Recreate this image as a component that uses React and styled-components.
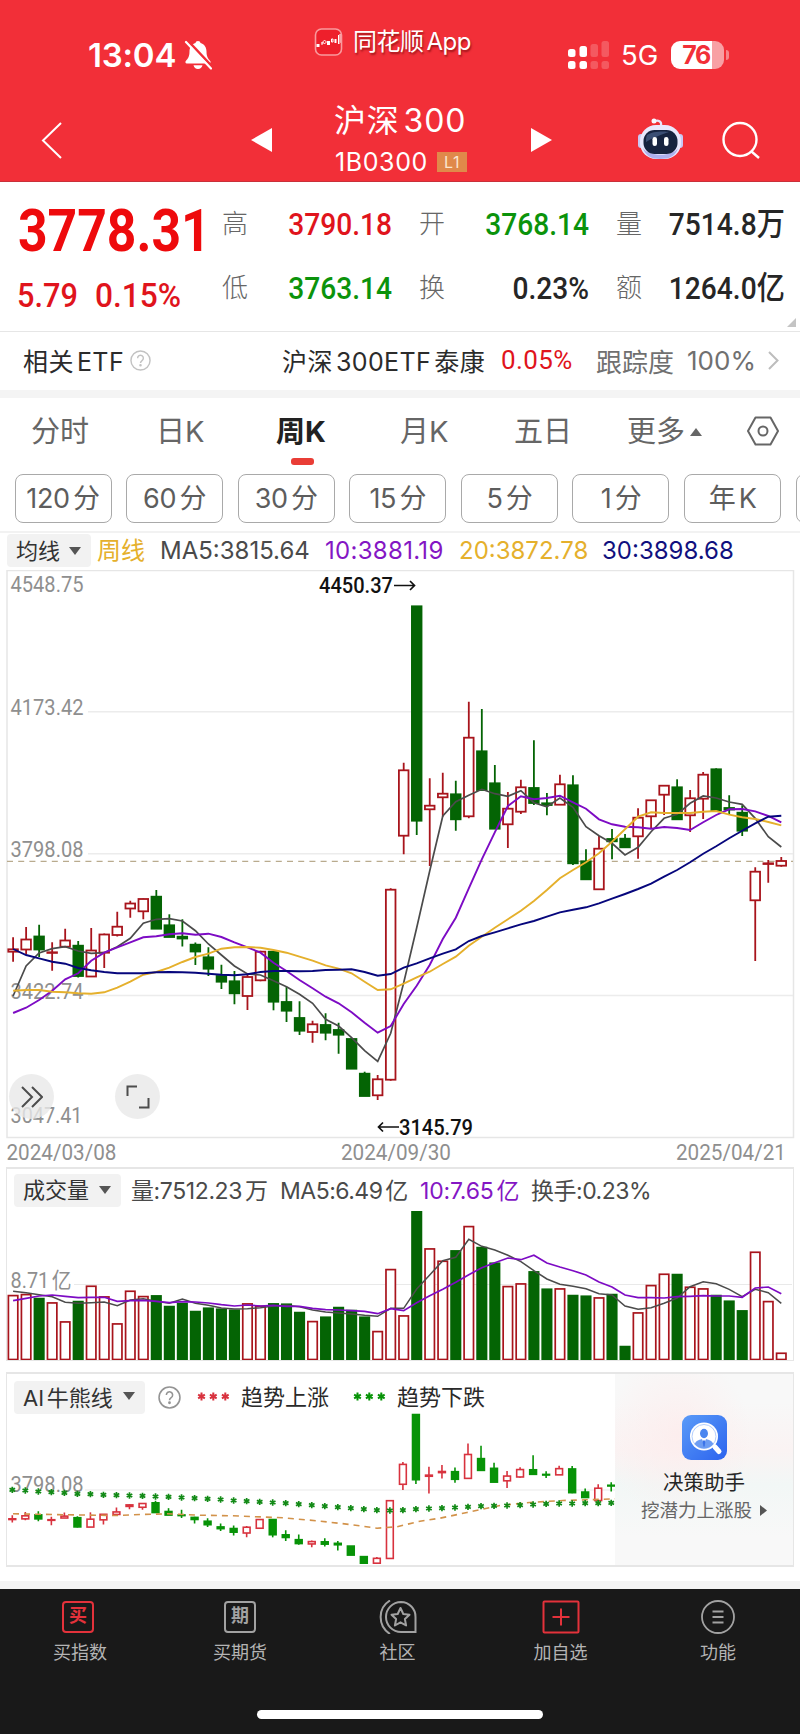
import React from 'react';
import styled, { createGlobalStyle } from 'styled-components';

const GlobalStyle = createGlobalStyle`
    *{
        box-sizing:border-box;
    }

    body{
        margin:0;
        background-color:#fff;
        font-family:Inter, "Noto Sans CJK SC", sans-serif;
        text-autospace:normal;
    }
`;

const RED = '#e0141c';
const GREEN = '#0b930b';

const Screen = styled.div`
    width:800px;
    height:1734px;
    display:flex;
    flex-direction:column;
    overflow:hidden;
    background-color:#fff;
    white-space:nowrap;
`;

/* ---------- header ---------- */

const Header = styled.header`
    height:182px;
    background-color:#f22f38;
    border-bottom:1px solid #c9303a;
    color:#fff;
`;

const StatusBar = styled.div`
    height:92px;
    display:grid;
    grid-template-columns:314px 252px 1fr;
`;

const Clock = styled.div`
    display:flex;
    align-items:center;
    gap:8px;
    padding:17px 0 0 88px;
    font-size:33px;
    font-weight:600;
    letter-spacing:-0.2px;
`;

const AppMark = styled.div`
    display:flex;
    align-items:flex-start;
    gap:10px;
    padding-top:28px;
    font-size:24px;
    font-weight:400;
    line-height:28px;
    letter-spacing:-0.5px;
    text-shadow:1px 2px 2px rgba(90,0,0,0.55);
`;

const Signals = styled.div`
    display:flex;
    align-items:center;
    padding:17px 0 0 2px;
    font-size:27.5px;

    span{
        margin:0 13px 0 11px;
    }
`;

const Battery = styled.div`
    width:53px;
    height:28px;
    border-radius:9px;
    background:linear-gradient(90deg, #fff 77%, #f8a0a4 77%);
    color:#f22f38;
    font-size:25px;
    font-weight:700;
    line-height:28px;
    letter-spacing:-1.5px;
    padding-left:11px;
`;

const BatteryTip = styled.i`
    width:3px;
    height:10px;
    margin-left:2px;
    border-radius:0 4px 4px 0;
    background-color:#f8858b;
`;

const TitleBar = styled.div`
    height:89px;
    display:grid;
    grid-template-columns:251px 83px 133px 85px 86px 84px 1fr;
    align-items:start;
`;

const IconSlot = styled.div`
    padding-top:${({ $top }) => $top}px;
    padding-left:${({ $left = 0 }) => $left}px;

    svg{
        display:block;
        margin-left:${({ $align }) => ($align === 'right' ? 'auto' : 0)};
    }
`;

const StockTitle = styled.div`
    .name{
        height:53px;
        padding-top:8px;
        font-size:32px;
        line-height:42px;
        letter-spacing:0.8px;
    }

    .code{
        display:flex;
        align-items:center;
        justify-content:space-between;
        height:34px;
        padding-left:1px;
        font-size:25px;
        letter-spacing:0.6px;
    }

    .level{
        width:30px;
        height:20px;
        background-color:#e0894a;
        color:#fbe6cf;
        font-size:16px;
        line-height:20px;
        text-align:center;
    }
`;

/* ---------- quote ---------- */

const Quote = styled.section`
    height:149px;
    display:grid;
    grid-template-columns:205px 1fr;
    position:relative;
`;

const Din = styled.span`
    display:inline-block;
    font-family:Roboto, "Noto Sans CJK SC", sans-serif;
    font-weight:${({ $weight = 500 }) => $weight};
    color:${({ $color = '#262626' }) => $color};
    text-autospace:no-autospace;
    transform:scaleX(${({ $k = 0.88 }) => $k});
    transform-origin:${({ $from = 'right' }) => $from} center;
`;

const PriceBox = styled.div`
    padding:11px 0 0 17px;

    .last{
        height:72px;
        padding-left:1px;
        font-size:60px;
        line-height:72px;
    }

    .change{
        display:grid;
        grid-template-columns:78px 1fr;
        padding-top:11px;
        font-size:33px;
        line-height:40px;
    }
`;

const Stats = styled.div`
    display:grid;
    grid-template-columns:170px 197px 196px;
    grid-template-rows:64px 65px;
    padding-top:10px;
    padding-left:17px;
`;

const Stat = styled.div`
    display:flex;
    justify-content:space-between;
    line-height:64px;
    padding-left:${({ $first }) => ($first ? 0 : 27)}px;

    .label{
        font-size:26px;
        font-weight:300;
        color:#666;
    }

    .value{
        width:0;
        display:flex;
        justify-content:flex-end;
        font-size:32px;
    }
`;

const Corner = styled.i`
    position:absolute;
    right:4px;
    bottom:4px;
    border-left:9px solid transparent;
    border-bottom:9px solid #c4c4c4;
`;

const EtfRow = styled.section`
    height:67px;
    display:grid;
    grid-template-columns:107px 152px 219px 95px 91px 81px 1fr;
    align-items:center;
    padding-left:23px;
    padding-bottom:2px;
    border-top:1px solid #e6e6e6;
    border-bottom:8px solid #f4f4f4;
    font-size:25px;
    letter-spacing:0.4px;
    color:#2b2b2b;

    .muted{
        color:#707070;
        font-size:26px;
        letter-spacing:0;
    }

    svg{
        display:block;
    }
`;

/* ---------- period tabs ---------- */

const Tabs = styled.nav`
    height:76px;
    display:grid;
    grid-template-columns:125px 120px 124px 114px 113px 119px 1fr;
    padding-left:31px;
`;

const Tab = styled.div`
    position:relative;
    font-size:29px;
    line-height:68px;
    color:${({ $active }) => ($active ? '#222' : '#666')};
    font-weight:${({ $active }) => ($active ? 700 : 400)};
    text-autospace:no-autospace;

    .bar{
        position:absolute;
        left:15px;
        top:60px;
        width:23px;
        height:7px;
        border-radius:3px;
        background-color:#e93d36;
    }

    svg{
        margin-left:5px;
        vertical-align:6px;
    }
`;

const Periods = styled.div`
    height:59px;
    display:flex;
    gap:14.6px;
    padding-left:14.5px;
    border-bottom:2px solid #f2f2f2;
    overflow:hidden;
`;

const Period = styled.button`
    flex:none;
    width:97px;
    height:49px;
    padding:0;
    border:1px solid #a9a9a9;
    border-radius:8px;
    background-color:#fff;
    color:#5d5d5d;
    font-family:inherit;
    font-size:27px;
    line-height:46px;
    letter-spacing:-0.4px;
`;

/* ---------- indicator legends ---------- */

const MaLegend = styled.div`
    height:37px;
    display:grid;
    grid-template-columns:90px 63px 165px 134px 143px 1fr;
    padding:1px 0 2px 7px;
    font-size:24px;
    line-height:34px;
`;

const Pick = styled.div`
    width:${({ $w }) => $w}px;
    height:33px;
    display:flex;
    align-items:center;
    justify-content:space-between;
    padding:0 10px ${({ $lift = 0 }) => $lift}px 9px;
    border-radius:4px;
    background-color:#f2f2f2;
    color:#333;
    font-size:22px;
`;

const Value = styled.span`
    color:${({ $color = '#4a4a4a' }) => $color};
    letter-spacing:${({ $ls = 0 }) => $ls}px;
`;

const ChartBox = styled.section`
    position:relative;
    height:597px;

    svg{
        display:block;
    }
`;

const RoundButton = styled.button`
    position:absolute;
    left:${({ $left }) => $left}px;
    top:504px;
    width:45px;
    height:45px;
    display:flex;
    align-items:center;
    justify-content:center;
    padding:0;
    border:none;
    border-radius:50%;
    background-color:rgba(232,232,232,0.8);
`;

const Panel = styled.section`
    height:${({ $h }) => $h}px;
    margin:0 6px ${({ $gap }) => $gap}px;
    border:1px solid #e6e6e6;
    border-top-width:2px;
    border-bottom-width:${({ $bottom = 1 }) => $bottom}px;
    display:flex;
`;

const PanelMain = styled.div`
    flex:1;
    min-width:0;
    overflow:hidden;

    > svg{
        display:block;
    }
`;

const VolumeLegend = styled.div`
    height:42px;
    display:grid;
    grid-template-columns:117px 149px 140px 111px 1fr;
    align-items:center;
    padding:5px 0 4px 7px;
    font-size:23px;
    line-height:30px;
`;

const TrendLegend = styled.div`
    height:39px;
    display:grid;
    grid-template-columns:144px 39px 44px 112px 44px 1fr;
    align-items:center;
    padding:5px 0 1px 7px;
    font-size:22px;
    color:#2a2a2a;

    .name{
        padding-bottom:4px;
    }

    svg{
        display:block;
    }
`;

const Assistant = styled.aside`
    width:178px;
    display:flex;
    flex-direction:column;
    align-items:center;
    padding-top:41px;
    background:
        radial-gradient(ellipse at 35% 32%, rgba(253,236,236,0.8), rgba(250,246,246,0) 45%),
        linear-gradient(180deg, #f8f8f8 15%, #faf3f3 40%, #f2f7f6 58%, #f8f8f8 85%);

    .title{
        margin-top:9px;
        font-size:20.5px;
        line-height:27px;
        color:#262626;
    }

    .hint{
        display:flex;
        align-items:center;
        gap:8px;
        font-size:18.5px;
        line-height:28px;
        color:#666;
    }
`;

/* ---------- bottom bar ---------- */

const Footer = styled.footer`
    flex:1;
    display:flex;
    flex-direction:column;
    justify-content:space-between;
    align-items:center;
    border-top:8px solid #f4f4f4;
    background-color:#191919;
    padding-bottom:15px;
`;

const NavBar = styled.nav`
    width:100%;
    display:grid;
    grid-template-columns:160px 160px 155px 171px 144px;
    padding-top:11px;
`;

const NavItem = styled.div`
    display:flex;
    flex-direction:column;
    align-items:center;
    gap:6px;
    font-size:18px;
    line-height:25px;
    color:#b4b4b4;

    svg{
        display:block;
    }
`;

const NavGlyph = styled.div`
    width:32px;
    height:32px;
    margin:1px ${({ $shift = 0 }) => $shift}px 1px 0;
    border:2px solid ${({ $color }) => $color};
    border-radius:4px;
    color:${({ $color }) => $color};
    font-size:18px;
    font-weight:700;
    line-height:26px;
    text-align:center;
`;

const HomeBar = styled.i`
    width:286px;
    height:9px;
    border-radius:5px;
    background-color:#fff;
`;

/* ---------- data ---------- */

// [up, high, body top, body bottom, low] in chart pixels
const CANDLES = [
    [1, 367.3, 379.3, 381.7, 391.7], [1, 357, 369.5, 379.5, 384], [0, 354.7, 366.5, 379.5, 387],
    [1, 372.3, 382.3, 382.7, 400.7], [1, 358.7, 370.5, 376.7, 377], [0, 371, 375.7, 406, 407.5],
    [1, 358, 380.5, 406.5, 406.5], [1, 363.5, 364.5, 382.7, 398], [1, 341.7, 356.7, 365, 366.5],
    [1, 330.7, 333.5, 338.5, 347.7], [1, 328.5, 329, 341.3, 349.3], [0, 320, 326.7, 358.7, 358.7],
    [0, 344.3, 355.3, 367, 367], [0, 349.3, 366.7, 368.5, 376.5], [0, 372.5, 374.7, 381.5, 395],
    [0, 377.3, 387.3, 398.7, 406], [0, 394.7, 406, 411.7, 419], [0, 401, 411.3, 423.3, 434.3],
    [1, 403.3, 407, 426, 440], [1, 380.7, 381.7, 410.3, 411.3], [0, 381.7, 381.7, 431.7, 440.3],
    [0, 416.7, 432, 440.7, 452], [0, 431.3, 448, 460.7, 465], [1, 450.7, 454.3, 462, 472.7],
    [0, 443.3, 455, 462.7, 470.3], [0, 452.7, 460, 464.7, 483.7], [0, 469, 469, 498.7, 498.7],
    [0, 501.7, 503.7, 526, 526], [1, 505, 509.3, 525.3, 530], [1, 318.3, 319.7, 509.7, 510.7],
    [1, 192.7, 200.3, 265.7, 284.3], [0, 36.3, 36.3, 250.7, 265], [1, 208.3, 235.7, 239.3, 296],
    [1, 202.7, 223.7, 227.3, 246.7], [0, 210.7, 224.3, 249.3, 260.7], [1, 131.7, 167.7, 246.3, 248.3],
    [0, 139, 181.3, 220, 220], [0, 195, 213.3, 258.7, 258.7], [1, 222, 238.7, 254.3, 278],
    [1, 209.7, 217.3, 241.7, 244], [0, 170.3, 218, 233, 235], [0, 223, 233.3, 235, 245.3],
    [1, 204.7, 214.3, 234.7, 234.7], [0, 205.3, 215.3, 293.3, 295], [0, 279.3, 291.3, 309.3, 309.3],
    [1, 266, 278.7, 319.3, 319.3], [0, 259, 269, 271.3, 289.3], [0, 264, 268.7, 277.3, 277.3],
    [1, 238.3, 247.7, 266.3, 288.7], [1, 230, 230.3, 246.3, 258.3], [1, 215, 215.7, 224.7, 245],
    [0, 209.3, 217.3, 249.3, 249.3], [1, 220, 228.3, 245.3, 262], [1, 202, 204.7, 228.7, 249],
    [0, 198.3, 199.3, 240.7, 240.7], [0, 225.3, 238, 239.5, 245], [0, 235.3, 242.7, 260.7, 266],
    [1, 297.3, 301.7, 330.3, 391], [1, 290, 293.3, 294, 312.7], [1, 287, 291, 295.7, 296.7],
];

const MA5 = [
    426, 396, 383, 378.7, 376.7, 381, 383.3, 382.7, 376.7, 368.3, 353.3, 349.3, 348.7, 351, 360.7, 374, 385, 396,
    404, 405, 410.7, 416.7, 424.3, 433.3, 449.3, 456, 467.7, 480.7, 491.3, 463.3, 412.7, 357.7, 301, 246, 231.7,
    225.3, 219.3, 223.7, 226.3, 220.7, 232.7, 236.7, 228, 237.3, 256.7, 265.7, 273.3, 285, 277.3, 261.7, 248.3,
    244.3, 233.3, 226, 228, 232, 234.3, 248.3, 266.7, 277,
];

const MA10 = [
    443, 437.7, 430, 420.7, 409.3, 403.3, 390.7, 382.7, 377.3, 372.3, 367.3, 366.3, 364.3, 363.3, 364.7, 363.7,
    367, 372.3, 377.3, 382.7, 392.7, 401, 410, 418.3, 426.7, 433.3, 442.3, 452.7, 462.7, 456, 434, 415.7, 395, 369,
    347.7, 318.3, 289.3, 262.3, 236, 226.3, 229.3, 228, 225.7, 232.3, 238.7, 249.3, 254.3, 256.7, 257.3, 258.7,
    257, 258, 260, 252.3, 245, 239.3, 239, 241.3, 246, 252.3,
];

const MA20 = [
    420.7, 420, 420, 421.7, 422.3, 423.3, 423.7, 422.3, 417.7, 411.7, 404.7, 402, 397.7, 392, 387, 383.7, 378.7,
    377.3, 377, 377.7, 380, 382.7, 386.7, 390.7, 395.3, 398.7, 403.3, 411.7, 420, 419.3, 413.7, 407.3, 401.7, 394,
    386.7, 375.7, 366.7, 357.7, 349.3, 340.7, 331, 320, 308.3, 300, 292.3, 283.3, 271.7, 259.3, 246.7, 242.3, 243,
    243, 243, 241.7, 241, 244.7, 247.3, 249, 252, 255.3,
];

const MA30 = [
    379, 385, 388.3, 391.7, 393.7, 398, 400.3, 402, 403.3, 403.3, 403.3, 402.3, 402, 402.3, 402.7, 403.7, 404.7,
    405.3, 404.3, 402, 401, 401, 401.3, 401, 400, 399.7, 399.3, 402, 405.7, 404, 397.7, 393.3, 388.3, 383.7, 379.3,
    371, 366, 362.3, 358.3, 354.3, 351, 346.7, 342.3, 339.7, 337.3, 333.3, 328.7, 324, 319, 313.7, 306.7, 300,
    292.3, 283.7, 276.3, 268.3, 260.7, 253.3, 246.7, 245.7,
];

// volume panel works on a grid three times finer than the screen
const VOLUME = [
    405, 402, 414, 427, 484, 423, 377, 409, 490, 392, 408, 406, 438, 429, 453, 443, 446, 449, 430, 437, 430, 431,
    456, 483, 470, 441, 450, 470, 513, 327, 466, 147, 265, 302, 271, 198, 261, 308, 378, 370, 334, 386, 385, 405,
    407, 412, 402, 558, 457, 375, 341, 342, 380, 385, 405, 422, 451, 275, 423, 578,
];

const VOLUME_MA5 = [
    394, 398, 404, 410, 427, 430, 428, 426, 437, 420, 416, 424, 430, 417, 430, 436, 444, 447, 446, 443, 438, 436,
    440, 450, 456, 459, 462, 466, 469, 445, 445, 387, 345, 302, 292, 238, 259, 270, 286, 305, 332, 357, 373, 379,
    386, 401, 405, 438, 448, 443, 430, 414, 380, 365, 371, 388, 410, 388, 398, 430,
];

const VOLUME_MA10 = [
    422, 415, 408, 405, 409, 413, 412, 412, 424, 422, 421, 424, 428, 425, 426, 429, 434, 438, 435, 438, 436, 439,
    439, 445, 449, 450, 452, 454, 461, 446, 452, 428, 407, 388, 367, 344, 323, 308, 294, 299, 286, 309, 321, 332,
    345, 366, 381, 405, 413, 413, 414, 410, 409, 407, 408, 408, 412, 384, 381, 401,
];

const TREND = [
    373, 375, 378, 380, 382, 385, 386, 388, 389, 390, 391, 393, 394, 396, 398, 400, 402, 405, 407, 409, 411, 413,
    416, 419, 422, 425, 428, 431, 434, 435, 434, 431, 429, 428, 426, 424, 422, 421, 420, 419, 417, 415, 414, 414,
    413, 413, 412,
];

// the last slot is an empty button scrolled past the screen edge
const PERIODS = ['120分', '60分', '30分', '15分', '5分', '1分', '年K', ''];

const STATS = [
    { label: '高', value: '3790.18', color: RED },
    { label: '开', value: '3768.14', color: GREEN },
    { label: '量', value: '7514.8万' },
    { label: '低', value: '3763.14', color: GREEN },
    { label: '换', value: '0.23%' },
    { label: '额', value: '1264.0亿' },
];

const STEP = 13.02;
const centre = (i) => 13.1 + STEP * i;
const line = (values, k = 1) => values.map((y, i) => `${centre(i).toFixed(1)},${(y / k).toFixed(1)}`).join(' ');

/* ---------- small drawings ---------- */

const Caret = ({ up, color = '#555', w = 12, h = 8 }) => (
    <svg width={w} height={h} viewBox="0 0 12 8">
        <path d={up ? 'M0 8L6 0L12 8Z' : 'M0 0H12L6 8Z'} fill={color} />
    </svg>
);

const Help = ({ size, color }) => (
    <svg width={size} height={size} viewBox="0 0 22 22" fill="none" stroke={color} strokeWidth="1.5">
        <circle cx="11" cy="11" r="10" />
        <path d="M8 8.6a3 3 0 1 1 4.6 2.5c-1 .7-1.6 1.2-1.6 2.6" />
        <circle cx="11" cy="16" r=".6" fill={color} />
    </svg>
);

const Star = ({ x, y, r = 3.2, color, width = 1.7 }) => (
    <path
        d={`M${x} ${y - r}V${y + r}M${x - r * 0.87} ${y - r / 2}L${x + r * 0.87} ${y + r / 2}M${x - r * 0.87} ${y + r / 2}L${x + r * 0.87} ${y - r / 2}`}
        stroke={color}
        strokeWidth={width}
    />
);

const Stars = ({ color }) => (
    <svg width="33" height="10" viewBox="0 0 33 10">
        {[4.5, 16.3, 28.3].map((x) => <Star key={x} x={x} y={4.5} r={3.9} color={color} width={2} />)}
    </svg>
);

const DinText = ({ x, y, w, size = 22, color = '#8f8f8f', weight = 400, children }) => (
    <text
        x={x}
        y={y}
        textLength={w}
        lengthAdjust="spacingAndGlyphs"
        fontFamily='Roboto, "Noto Sans CJK SC", sans-serif'
        fontSize={size}
        fontWeight={weight}
        fill={color}
    >
        {children}
    </text>
);

const BellOff = () => (
    <svg width="28" height="30" viewBox="0 0 28 30">
        <path
            d="M14 1C12.500 1 11.700 1.800 11.500 3C7.600 4 5.500 7.500 5.500 11.500C5.500 16.500 4 18.500 1.800 21C1 22 1.400 23.400 2.800 23.400H25.200C26.600 23.400 27 22 26.200 21C24 18.500 22.500 16.500 22.500 11.500C22.500 7.500 20.400 4 16.500 3C16.300 1.800 15.500 1 14 1ZM9.500 25.200C10 27.500 11.700 29 14 29S18 27.500 18.500 25.200Z"
            fill="#fff"
        />
        <path d="M4 1L28 26.500" stroke="#f22f38" strokeWidth="2.600" />
        <path d="M2 2L27 28.500" stroke="#fff" strokeWidth="2.200" strokeLinecap="round" />
    </svg>
);

const AppLogo = () => (
    <svg width="29" height="28" viewBox="0 0 28 28" fill="none">
        <rect x="1" y="1" width="26" height="26" rx="6" fill="#ee1f2b" stroke="#f99a9d" strokeWidth="1.600" />
        <path d="M2 16h3v3h-3zM12.500 13h3v4h-3zM20 11h2v4h-2z" fill="#fff" />
        <path d="M7.500 14v3M7 15h2M10 12.500a1.500 1.500 0 1 0 .1 0M17 11v3h1.500v-3zM24 7v9l1.500-1.500V6" stroke="#fff" strokeWidth="1" />
    </svg>
);

const SignalDots = () => (
    <svg width="42" height="30" viewBox="0 0 42 30" fill="#fff">
        <rect x="0" y="9" width="7.500" height="8" rx="2.500" />
        <rect x="11.500" y="6" width="7.500" height="11" rx="2.500" />
        <rect x="0" y="21" width="7.500" height="8" rx="2.500" />
        <rect x="11.500" y="21" width="7.500" height="8" rx="2.500" />
        <g opacity=".2">
            <rect x="22.500" y="4" width="7.500" height="13" rx="2.500" />
            <rect x="33.500" y="1" width="7.500" height="16" rx="2.500" />
            <rect x="22.500" y="21" width="7.500" height="8" rx="2.500" />
            <rect x="33.500" y="21" width="7.500" height="8" rx="2.500" />
        </g>
    </svg>
);

const Robot = () => (
    <svg width="45" height="42" viewBox="0 0 45 42">
        <path d="M23 8C24 3 20 2 17 3" fill="none" stroke="#e7e4fb" strokeWidth="2.200" />
        <circle cx="16" cy="3" r="2.500" fill="#f8f7ff" />
        <rect x="0" y="16" width="6" height="14" rx="3" fill="#c9c8f5" />
        <rect x="39" y="16" width="6" height="14" rx="3" fill="#c9c8f5" />
        <rect x="2" y="7" width="41" height="34" rx="16" fill="#e9e8fd" />
        <path d="M5 30c5 9 30 9 35 0-2 8-9 11-17.500 11S7 38 5 30z" fill="#aeb0ee" />
        <rect x="5.500" y="12" width="34" height="24" rx="11" fill="#17233f" />
        <path d="M9 17c5-4 18-4 22-3-6 2-15 5-23 10 0-3 0-5 1-7z" fill="#3b4e74" />
        <rect x="14.500" y="19" width="4.500" height="9" rx="2.200" fill="#fff" />
        <rect x="26" y="19" width="4.500" height="9" rx="2.200" fill="#fff" />
    </svg>
);

const Candle = ({ x, data, y, w, up, down, stroke }) => {
    const [rise, ...levels] = data;
    const [high, top, bottom, low] = levels.map(y);
    const color = rise ? up : down;
    const height = Math.max(bottom - top, 0.6);
    return (
        <g stroke={color} strokeWidth={stroke}>
            <path d={`M${x} ${high}V${top}M${x} ${bottom}V${low}`} />
            <rect x={x - w / 2} y={top} width={w} height={height} fill={rise ? '#fff' : down} />
        </g>
    );
};

function PriceChart() {
    return (
        <svg width="800" height="597" viewBox="0 0 800 597" fill="none">
            <rect x="7" y=".5" width="786.500" height="567" stroke="#e6e6e6" strokeWidth="1.500" />
            <path d="M88 141.700H793M88 283.700H793M88 425.600H793" stroke="#ececec" strokeWidth="1.500" />
            <path d="M7 291.400H793" stroke="#b9ab8e" strokeWidth="1.100" strokeDasharray="6 5.200" />

            <DinText x="10.500" y="22.300" w="73">4548.75</DinText>
            <DinText x="10.500" y="145.300" w="73">4173.42</DinText>
            <DinText x="10.500" y="287.300" w="73">3798.08</DinText>
            <DinText x="10.500" y="428.700" w="73">3422.74</DinText>
            <DinText x="10.500" y="552.700" w="72">3047.41</DinText>

            {CANDLES.map((data, i) => (
                <Candle key={i} x={centre(i)} data={data} y={(v) => v} w={9.6} up="#a8141c" down="#046404" stroke={1.8} />
            ))}

            <polyline points={line(MA5)} stroke="#4b4b4b" strokeWidth="1.700" />
            <polyline points={line(MA10)} stroke="#7d0bc4" strokeWidth="1.900" />
            <polyline points={line(MA20)} stroke="#e5b02c" strokeWidth="1.900" />
            <polyline points={line(MA30)} stroke="#06067c" strokeWidth="1.900" />

            <DinText x="319" y="23.300" w="74" color="#111" weight={500}>4450.37</DinText>
            <path d="M394 15.500H414M410 11L414.500 15.500L410 20" stroke="#111" strokeWidth="1.700" />
            <DinText x="399" y="565" w="74" color="#111" weight={500}>3145.79</DinText>
            <path d="M399 557H378.500M383 552.500L378.500 557L383 561.500" stroke="#111" strokeWidth="1.700" />

            <DinText x="6.500" y="589.500" w="110">2024/03/08</DinText>
            <DinText x="341" y="589.500" w="110">2024/09/30</DinText>
            <DinText x="676" y="589.500" w="110">2025/04/21</DinText>
        </svg>
    );
}

function VolumeChart() {
    return (
        <svg width="785" height="149" viewBox="7 51 785 149" fill="none">
            <path d="M74 124.500H793" stroke="#e9e9e9" />
            <DinText x="10.500" y="127.800" w="61">8.71亿</DinText>
            {VOLUME.map((top, i) => {
                const rise = CANDLES[i][0];
                return (
                    <rect
                        key={i}
                        x={centre(i) - 4.7}
                        y={top / 3 + 0.6}
                        width={9.4}
                        height={198.9 - top / 3}
                        stroke={rise ? '#a8141c' : '#046404'}
                        strokeWidth={1.7}
                        fill={rise ? '#fff' : '#046404'}
                    />
                );
            })}
            <polyline points={line(VOLUME_MA5, 3)} stroke="#4b4b4b" strokeWidth="1.500" />
            <polyline points={line(VOLUME_MA10, 3)} stroke="#7d0bc4" strokeWidth="1.700" />
        </svg>
    );
}

function TrendChart() {
    // same candles as the main chart, squeezed into the lower panel
    const squeeze = (v) => v * 0.304 + 38;
    return (
        <svg width="608" height="151" viewBox="7 47.500 608 151" fill="none">
            <path d="M85 124.500H615" stroke="#e9e9e9" />
            <DinText x="10.500" y="126.500" w="73">3798.08</DinText>
            {CANDLES.slice(0, 47).map((data, i) => (
                <Candle key={i} x={centre(i) - 0.8} data={data} y={squeeze} w={6.8} up="#d8323e" down="#079307" stroke={1.6} />
            ))}
            <path
                d="M13 148.300L67 149.300L117 150L140 149L167 148.300L200 149.700L233 150.300L283 152.300L317 155.300L350 159L377 162.700L397 161.300L420 155.700L440 152.700L467 147L500 140L533 136.700L563 135L587 134.300L615 133.300"
                stroke="#d2924a"
                strokeWidth="1.600"
                strokeDasharray="6 5"
            />
            {TREND.map((y, i) => <Star key={i} x={centre(i) - 0.8} y={y / 3} color="#128a16" />)}
        </svg>
    );
}

const SearchPerson = () => (
    <svg width="45" height="45" viewBox="0 0 45 45">
        <defs>
            <linearGradient id="assistant" x1="0" y1="0" x2="1" y2="1">
                <stop offset="0" stopColor="#5a9bf8" />
                <stop offset="1" stopColor="#2c63ee" />
            </linearGradient>
        </defs>
        <rect width="45" height="45" rx="9" fill="url(#assistant)" />
        <path d="M33 32L37 36.500" stroke="#fff" strokeWidth="5" strokeLinecap="round" />
        <circle cx="22" cy="21.500" r="14" fill="#fff" />
        <circle cx="22" cy="21.500" r="12" fill="none" stroke="#9fc0fa" strokeWidth=".8" />
        <ellipse cx="22" cy="18.500" rx="4" ry="4.700" fill="#4a86f0" />
        <path d="M12.500 29c2-4 6-4.500 7.500-5l2 7 2-7c1.500.5 5.500 1 7.500 5-5 6-14 6-19 0z" fill="#6d9df3" />
        <path d="M20.500 25.500h3l-.8 6h-1.400z" fill="#3a72e8" />
    </svg>
);

/* ---------- page ---------- */

function App() {
    return (
        <>
            <GlobalStyle />
            <Screen>
                <Header>
                    <StatusBar>
                        <Clock>13:04<BellOff /></Clock>
                        <AppMark><AppLogo />同花顺App</AppMark>
                        <Signals>
                            <SignalDots />
                            <span>5G</span>
                            <Battery>76</Battery>
                            <BatteryTip />
                        </Signals>
                    </StatusBar>
                    <TitleBar>
                        <IconSlot $top={30} $left={41}>
                            <svg width="21" height="37" viewBox="0 0 21 37" fill="none" stroke="#fff" strokeWidth="2">
                                <path d="M20 1L2 18.500L20 36" />
                            </svg>
                        </IconSlot>
                        <IconSlot $top={36}>
                            <svg width="21" height="24"><path d="M21 0V24L0 12Z" fill="#fff" /></svg>
                        </IconSlot>
                        <StockTitle>
                            <div className="name">沪深300</div>
                            <div className="code">1B0300<span className="level">L1</span></div>
                        </StockTitle>
                        <IconSlot $top={36} $align="right">
                            <svg width="21" height="24"><path d="M0 0V24L21 12Z" fill="#fff" /></svg>
                        </IconSlot>
                        <span />
                        <IconSlot $top={26}><Robot /></IconSlot>
                        <IconSlot $top={29}>
                            <svg width="38" height="38" viewBox="0 0 38 38" fill="none" stroke="#fff" strokeWidth="2.400">
                                <circle cx="18" cy="18.500" r="16.500" />
                                <path d="M29.500 30.500L37 37" />
                            </svg>
                        </IconSlot>
                    </TitleBar>
                </Header>

                <Quote>
                    <PriceBox>
                        <div className="last"><Din $color="#ee0a0c" $weight={700} $k={0.86} $from="left">3778.31</Din></div>
                        <div className="change">
                            <Din $color={RED} $k={0.93} $from="left">5.79</Din>
                            <Din $color={RED} $k={0.96} $from="left">0.15%</Din>
                        </div>
                    </PriceBox>
                    <Stats>
                        {STATS.map(({ label, value, color }, i) => (
                            <Stat key={label} $first={i % 3 === 0}>
                                <span className="label">{label}</span>
                                <span className="value"><Din $color={color}>{value}</Din></span>
                            </Stat>
                        ))}
                    </Stats>
                    <Corner />
                </Quote>

                <EtfRow>
                    <span>相关ETF</span>
                    <Help size={21} color="#c2c2c2" />
                    <span>沪深300ETF泰康</span>
                    <span><Din $color={RED} $weight={400} $k={1.04} $from="left">0.05%</Din></span>
                    <span className="muted">跟踪度</span>
                    <span className="muted">100%</span>
                    <svg width="11" height="19" viewBox="0 0 11 19" fill="none" stroke="#bdbdbd" strokeWidth="2">
                        <path d="M1 1L9.500 9.500L1 18" />
                    </svg>
                </EtfRow>

                <Tabs>
                    <Tab>分时</Tab>
                    <Tab>日K</Tab>
                    <Tab $active>周K<i className="bar" /></Tab>
                    <Tab>月K</Tab>
                    <Tab>五日</Tab>
                    <Tab>更多<Caret up color="#666" /></Tab>
                    <IconSlot $top={18} $left={1}>
                        <svg width="32" height="30" viewBox="0 0 32 30" fill="none" stroke="#666" strokeWidth="2">
                            <path d="M8.500 1.500H23.500L31 15L23.500 28.500H8.500L1 15Z" strokeLinejoin="round" />
                            <circle cx="16" cy="15" r="4.500" />
                        </svg>
                    </IconSlot>
                </Tabs>
                <Periods>
                    {PERIODS.map((name) => <Period key={name}>{name}</Period>)}
                </Periods>

                <MaLegend>
                    <Pick $w={84}>均线<Caret /></Pick>
                    <Value $color="#e5b02c">周线</Value>
                    <Value>MA5:3815.64</Value>
                    <Value $color="#8416c4" $ls={0.3}>10:3881.19</Value>
                    <Value $color="#e5b02c">20:3872.78</Value>
                    <Value $color="#10107e">30:3898.68</Value>
                </MaLegend>
                <ChartBox>
                    <PriceChart />
                    <RoundButton $left={9}>
                        <svg width="22" height="22" viewBox="0 0 22 22" fill="none" stroke="#4d4d4d" strokeWidth="2">
                            <path d="M1 1L11 11L1 21M11 1L21 11L11 21" />
                        </svg>
                    </RoundButton>
                    <RoundButton $left={115}>
                        <svg width="24" height="24" viewBox="0 0 24 24" fill="none" stroke="#4d4d4d" strokeWidth="2">
                            <path d="M1.500 11V1.500H11M22.500 13V22.500H13" />
                        </svg>
                    </RoundButton>
                </ChartBox>

                <Panel $h={194} $gap={11}>
                    <PanelMain>
                        <VolumeLegend>
                            <Pick $w={107} $lift={2}>成交量<Caret /></Pick>
                            <Value $ls={-0.4}>量:7512.23万</Value>
                            <Value $ls={-0.5}>MA5:6.49亿</Value>
                            <Value $color="#8416c4" $ls={-0.2}>10:7.65亿</Value>
                            <Value $ls={-0.5}>换手:0.23%</Value>
                        </VolumeLegend>
                        <VolumeChart />
                    </PanelMain>
                </Panel>

                <Panel $h={195} $gap={14} $bottom={2}>
                    <PanelMain>
                        <TrendLegend>
                            <Pick $w={131} $lift={3}>AI牛熊线<Caret /></Pick>
                            <span><Help size={23} color="#949494" /></span>
                            <Stars color="#d8323e" />
                            <span className="name">趋势上涨</span>
                            <Stars color="#079307" />
                            <span className="name">趋势下跌</span>
                        </TrendLegend>
                        <TrendChart />
                    </PanelMain>
                    <Assistant>
                        <SearchPerson />
                        <div className="title">决策助手</div>
                        <div className="hint">
                            挖潜力上涨股
                            <svg width="7" height="11"><path d="M0 0L7 5.500L0 11Z" fill="#555" /></svg>
                        </div>
                    </Assistant>
                </Panel>

                <Footer>
                    <NavBar>
                        <NavItem><NavGlyph $color="#e3323b" $shift={4}>买</NavGlyph>买指数</NavItem>
                        <NavItem><NavGlyph $color="#a2a2a2">期</NavGlyph>买期货</NavItem>
                        <NavItem>
                            <svg width="38" height="34" viewBox="0 0 38 34" fill="none" stroke="#a2a2a2" strokeWidth="2">
                                <path d="M11 .500C-1.500 8-1.500 26 11 34" />
                                <path d="M22 2a15 15 0 1 0 0 30H36.500V17A14.700 14.700 0 0 0 22 2z" />
                                <path d="M21.500 8l2.800 6 6.200.8-4.600 4.300 1.200 6.400-5.600-3.200-5.600 3.200 1.200-6.400-4.600-4.300 6.200-.8z" strokeLinejoin="round" />
                            </svg>
                            社区
                        </NavItem>
                        <NavItem>
                            <svg width="38" height="34" viewBox="0 0 38 34" fill="none" stroke="#e3323b" strokeWidth="2">
                                <rect x="1.500" y="1.500" width="35" height="31" rx="1" />
                                <path d="M19 8.500V25.500M10.500 17H27.500" />
                            </svg>
                            加自选
                        </NavItem>
                        <NavItem>
                            <svg width="34" height="34" viewBox="0 0 34 34" fill="none" stroke="#a2a2a2" strokeWidth="1.800">
                                <circle cx="17" cy="17" r="16" />
                                <path d="M11.500 11.500H22.500M11.500 17H22.500M11.500 22.500H22.500" />
                            </svg>
                            功能
                        </NavItem>
                    </NavBar>
                    <HomeBar />
                </Footer>
            </Screen>
        </>
    );
}

export default App;
